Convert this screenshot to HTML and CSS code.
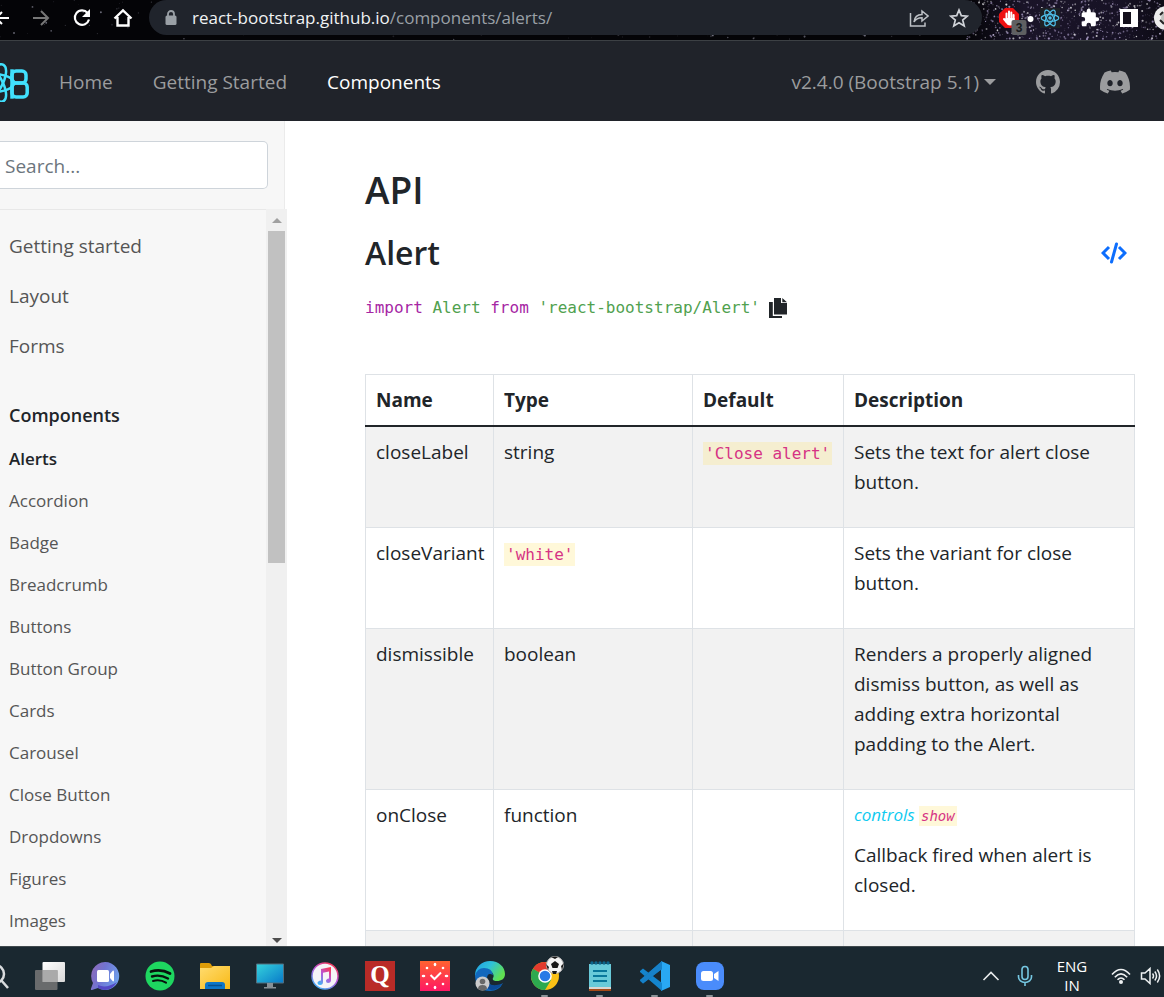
FILE: index.html
```html
<!DOCTYPE html>
<html lang="en">
<head>
<meta charset="utf-8">
<title>Alerts | React-Bootstrap</title>
<link rel="stylesheet" href="styles.css">
</head>
<body>
<header class="browser">
  <svg class="stars" id="stars" aria-hidden="true"></svg>
  <div class="browser-nav">
    <button class="icon-btn" aria-label="Back"><svg width="10" height="20" viewBox="10 0 10 20"><path d="M19 10H6M12 4l-6 6 6 6" fill="none" stroke="#fff" stroke-width="2"/></svg></button>
    <button class="icon-btn" aria-label="Forward"><svg width="20" height="20" viewBox="0 0 20 20"><path d="M2 10h14M10 3l7 7-7 7" fill="none" stroke="#777" stroke-width="2"/></svg></button>
    <button class="icon-btn" aria-label="Reload"><svg width="20" height="20" viewBox="0 0 20 20"><path d="M15.600 5A7.200 7.200 0 1 0 17 11.500" fill="none" stroke="#fff" stroke-width="2.200"/><path d="M18 1v8h-8z" fill="#fff"/></svg></button>
    <button class="icon-btn" aria-label="Home"><svg width="20" height="20" viewBox="0 0 20 20"><path d="M1.500 10.500L10 2.500l8.500 8M4.500 9v8.500h11V9" fill="none" stroke="#fff" stroke-width="2.400"/></svg></button>
  </div>
  <div class="address">
    <svg width="12" height="16" viewBox="0 0 12 16"><rect x="0.500" y="5.500" width="11" height="9.500" rx="1.500" fill="#9aa0a6"/><path d="M3 6V4a3 3 0 0 1 6 0v2" fill="none" stroke="#9aa0a6" stroke-width="1.800"/></svg>
    <span class="url">react-bootstrap.github.io<span class="url-path">/components/alerts/</span></span>
    <button class="icon-btn" aria-label="Share"><svg width="20" height="20" viewBox="0 0 20 20"><path d="M1.500 5v13H16v-3.500M5 14c.5-5 3-7.500 8-7.500V3l6 5-6 5V9.700c-4 0-6.300 1-8 4.300z" fill="none" stroke="#bdc1c6" stroke-width="1.500"/></svg></button>
    <button class="icon-btn" aria-label="Bookmark"><svg width="20" height="20" viewBox="0 0 20 20"><path d="M10 2l2.300 5.600 6 .5-4.600 3.900 1.500 5.900L10 14.700l-5.200 3.200L6.300 12 1.700 8.100l6-.5z" fill="none" stroke="#d0d3d8" stroke-width="1.700"/></svg></button>
  </div>
  <div class="extensions">
    <svg width="21" height="30" viewBox="0 -5 21 30"><path d="M6 0h8l6 6v8l-6 6H6l-6-6V6z" fill="#ed1111"/><g fill="none" stroke="#fff" stroke-width="2" stroke-linecap="round"><path d="M7.500 11V5.500M10 11V3.500M12.300 11V4.500M14.600 12V7M5 11l2.500 3"/></g><path d="M6.500 10h9.100v3q0 4.500-4.500 4.500-3 0-4.600-3.500z" fill="#fff"/><rect x="12.500" y="12" width="15" height="15" rx="2" fill="#5f6062"/><text x="20" y="24" font-size="12" text-anchor="middle" fill="#17191c" class="badge-text">3</text><circle cx="31.500" cy="11" r="3" fill="#fff"/></svg>
    <svg width="20" height="20" viewBox="0 0 20 20"><path d="M0 0h20v20H0z" fill="#1e2125"/><g fill="none" stroke="#4fbfe8" stroke-width="1.200"><ellipse cx="10" cy="10" rx="8.800" ry="3.400"/><ellipse cx="10" cy="10" rx="8.800" ry="3.400" transform="rotate(60 10 10)"/><ellipse cx="10" cy="10" rx="8.800" ry="3.400" transform="rotate(120 10 10)"/></g><circle cx="10" cy="10" r="1.800" fill="#4fbfe8"/></svg>
    <svg width="20" height="20" viewBox="0 0 24 24"><path d="M20.500 11H19V7a2 2 0 0 0-2-2h-4V3.500a2.500 2.500 0 0 0-5 0V5H4a2 2 0 0 0-2 2v3.800h1.500a2.700 2.700 0 0 1 0 5.400H2V20a2 2 0 0 0 2 2h3.800v-1.500a2.700 2.700 0 0 1 5.400 0V22H17a2 2 0 0 0 2-2v-4h1.500a2.500 2.500 0 0 0 0-5z" fill="#fff"/></svg>
    <svg width="20" height="20" viewBox="0 0 20 20"><path d="M0 1h18v18H0z" fill="#fff"/><path d="M3 4h8v12H3z" fill="#14101c"/></svg>
    <svg width="10" height="24" viewBox="0 0 10 24"><circle cx="12" cy="12" r="12" fill="#ececec"/><circle cx="14" cy="12" r="7" fill="#bfc0bd"/><path d="M6 9l3-3M6 14l4 4" stroke="#252525" stroke-width="2"/></svg>
  </div>
</header>

<nav class="navbar">
  <a class="brand" href="#home" aria-label="React Bootstrap"><svg width="30" height="40" viewBox="0 0 30 40"><g fill="none" stroke="#41e0fd"><g stroke-width="2.500"><ellipse cx="-7" cy="21" rx="21" ry="9"/><ellipse cx="-7" cy="21" rx="21" ry="9" transform="rotate(60 -7 21)"/><ellipse cx="-7" cy="21" rx="21" ry="9" transform="rotate(-60 -7 21)"/></g><rect x="12" y="9" width="14" height="12" rx="4" stroke-width="3.500"/><rect x="12" y="21" width="15.200" height="14" rx="4" stroke-width="3.500"/><path d="M12 7.300v29.400" stroke-width="3.500"/></g></svg></a>
  <a class="nav-link" href="#home">Home</a>
  <a class="nav-link" href="#start">Getting Started</a>
  <a class="nav-link current" href="#components">Components</a>
  <button class="version">v2.4.0 (Bootstrap 5.1)<span class="caret"></span></button>
  <a class="social" href="#github" aria-label="GitHub"><svg width="24" height="24" viewBox="0 0 16 16"><path fill="#9b9c9e" d="M8 0C3.580 0 0 3.580 0 8c0 3.540 2.290 6.530 5.470 7.590.4.070.55-.17.55-.38 0-.19-.01-.82-.01-1.490-2.010.37-2.530-.49-2.690-.94-.09-.23-.48-.94-.82-1.130-.28-.15-.68-.52-.01-.53.63-.01 1.080.58 1.230.82.72 1.210 1.870.87 2.330.66.070-.52.28-.87.51-1.070-1.780-.2-3.640-.89-3.640-3.950 0-.87.31-1.590.82-2.150-.08-.2-.36-1.020.08-2.120 0 0 .67-.21 2.200.82.64-.18 1.320-.27 2-.27s1.360.09 2 .27c1.530-1.040 2.200-.82 2.200-.82.44 1.100.16 1.920.08 2.120.51.56.82 1.270.82 2.150 0 3.070-1.870 3.750-3.650 3.950.29.25.54.73.54 1.480 0 1.070-.01 1.930-.01 2.200 0 .21.15.46.55.38A8.010 8.010 0 0 0 16 8c0-4.420-3.580-8-8-8z"/></svg></a>
  <a class="social" href="#discord" aria-label="Discord"><svg width="30" height="30" viewBox="0 0 16 16"><path fill="#9b9c9e" d="M13.545 2.907a13.227 13.227 0 0 0-3.257-1.011.05.05 0 0 0-.052.025c-.141.25-.297.577-.406.833a12.190 12.190 0 0 0-3.658 0 8.258 8.258 0 0 0-.412-.833.051.051 0 0 0-.052-.025c-1.125.194-2.220.534-3.257 1.011a.041.041 0 0 0-.021.018C.356 6.024-.213 9.047.066 12.032c.001.014.01.028.021.037a13.276 13.276 0 0 0 3.995 2.020.05.05 0 0 0 .056-.019c.308-.42.582-.863.818-1.329a.05.05 0 0 0-.028-.07 8.735 8.735 0 0 1-1.248-.595.05.05 0 0 1-.005-.085c.084-.063.168-.129.248-.195a.05.05 0 0 1 .051-.007c2.619 1.196 5.454 1.196 8.041 0a.052.052 0 0 1 .053.007c.08.066.164.132.248.195a.051.051 0 0 1-.004.085 8.254 8.254 0 0 1-1.249.594.05.05 0 0 0-.027.071c.24.465.515.909.817 1.329a.05.05 0 0 0 .056.019 13.235 13.235 0 0 0 4.001-2.020.049.049 0 0 0 .021-.037c.334-3.451-.559-6.449-2.366-9.106a.034.034 0 0 0-.020-.019zM5.347 10.214c-.789 0-1.438-.724-1.438-1.612s.637-1.613 1.438-1.613c.807 0 1.450.73 1.438 1.613 0 .888-.637 1.612-1.438 1.612zm5.316 0c-.788 0-1.438-.724-1.438-1.612s.637-1.613 1.438-1.613c.807 0 1.451.73 1.438 1.613 0 .888-.631 1.612-1.438 1.612z"/></svg></a>
</nav>

<div class="page">
  <aside class="sidebar">
    <form class="search"><input type="search" placeholder="Search..." aria-label="Search"></form>
    <div class="toc">
      <ul class="toc-list">
        <li class="section"><a href="#s1">Getting started</a></li>
        <li class="section"><a href="#s2">Layout</a></li>
        <li class="section"><a href="#s3">Forms</a></li>
        <li class="section open"><a href="#s4">Components</a></li>
        <li class="active"><a href="#alerts">Alerts</a></li>
        <li><a href="#accordion">Accordion</a></li>
        <li><a href="#badge">Badge</a></li>
        <li><a href="#breadcrumb">Breadcrumb</a></li>
        <li><a href="#buttons">Buttons</a></li>
        <li><a href="#button-group">Button Group</a></li>
        <li><a href="#cards">Cards</a></li>
        <li><a href="#carousel">Carousel</a></li>
        <li><a href="#close-button">Close Button</a></li>
        <li><a href="#dropdowns">Dropdowns</a></li>
        <li><a href="#figures">Figures</a></li>
        <li><a href="#images">Images</a></li>
      </ul>
      <div class="scrollbar">
        <span class="arrow up"></span><span class="thumb"></span><span class="arrow down"></span>
      </div>
    </div>
  </aside>
  <main class="content">
    <h2>API</h2>
    <div class="title-row">
      <h3>Alert</h3>
      <a href="#source" aria-label="View source"><svg width="26" height="22" viewBox="0 0 26 22"><path d="M8 5l-6 6 6 6M18 5l6 6-6 6" fill="none" stroke="#0d6efd" stroke-width="3"/><path d="M15.500 2l-5 18" stroke="#0d6efd" stroke-width="3" stroke-linecap="round"/></svg></a>
    </div>
    <div class="import-row">
      <code><span class="kw">import</span> Alert <span class="kw">from</span> 'react-bootstrap/Alert'</code>
      <button class="icon-btn" aria-label="Copy"><svg width="18" height="20" viewBox="0 0 18 20"><path d="M5 0h7v5h6v11.500H5zM13.300 0L18 4.200h-4.700zM0 4h3.800v14H13v2H0z" fill="#212529"/></svg></button>
    </div>
    <table>
      <colgroup><col class="c-name"><col class="c-type"><col class="c-default"><col></colgroup>
      <thead><tr><th>Name</th><th>Type</th><th>Default</th><th>Description</th></tr></thead>
      <tbody>
        <tr><td>closeLabel</td><td>string</td><td><code>'Close alert'</code></td><td><p>Sets the text for alert close button.</p></td></tr>
        <tr><td>closeVariant</td><td><code>'white'</code></td><td></td><td><p>Sets the variant for close button.</p></td></tr>
        <tr><td>dismissible</td><td>boolean</td><td></td><td><p>Renders a properly aligned dismiss button, as well as adding extra horizontal padding to the Alert.</p></td></tr>
        <tr><td>onClose</td><td>function</td><td></td><td><div class="controls">controls <code>show</code></div><p>Callback fired when alert is closed.</p></td></tr>
        <tr><td>&nbsp;</td><td></td><td></td><td></td></tr>
      </tbody>
    </table>
  </main>
</div>

<footer class="taskbar">
  <svg width="22" height="30" viewBox="0 0 22 30"><circle cx="-5" cy="13" r="9" fill="none" stroke="#d9dcde" stroke-width="2.500"/><path d="M1 19l7 8" stroke="#d9dcde" stroke-width="2.500"/></svg>
  <div class="apps">
    <span class="app"><svg viewBox="0 0 30 30"><defs><linearGradient id="tv" x1="0" y1="0" x2="1" y2="1"><stop stop-color="#fff"/><stop offset="1" stop-color="#d8d8d8"/></linearGradient></defs><rect x="7.500" y="1" width="22.500" height="20" rx="1" fill="url(#tv)"/><rect y="9" width="22.500" height="20" rx="1" fill="#747474" fill-opacity=".88"/><path d="M7.500 9h15v12h-15z" fill="#aaa"/></svg></span>
    <span class="app"><svg viewBox="0 0 30 30"><defs><linearGradient id="tm" x1="0" x2="1" y2=".4"><stop stop-color="#9469b5"/><stop offset=".5" stop-color="#7074d2"/><stop offset="1" stop-color="#6f9be8"/></linearGradient></defs><path d="M15 1a14 14 0 1 1-7 26l-6 2q-1.500 0-1-1.500L3 22A14 14 0 0 1 15 1z" fill="url(#tm)"/><path d="M8 24q8 4 19-3-5 8-12 8-4 0-7-2z" fill="#5449c5"/><rect x="7" y="9" width="12" height="12" rx="1.500" fill="#fff"/><path d="M20 13l3-3.500q1 0 1 1v9q0 1-1 1L20 17z" fill="#fff"/></svg></span>
    <span class="app"><svg viewBox="0 0 30 30"><circle cx="15" cy="15" r="14.500" fill="#1ed760"/><g fill="none" stroke="#08130d" stroke-linecap="round"><path d="M6 10.500q10-3 19 2" stroke-width="2.800"/><path d="M7 15.500q8-2.500 16 2" stroke-width="2.400"/><path d="M8 20q7-2 13 1.700" stroke-width="2"/></g></svg></span>
    <span class="app"><svg viewBox="0 0 30 30"><defs><linearGradient id="fd" x1="0" y1="0" x2="1" y2="1"><stop stop-color="#ffdc70"/><stop offset="1" stop-color="#f9b915"/></linearGradient></defs><path d="M0 3q0-1 1-1h8q2 0 3 3h17v10H0z" fill="#dd9c08"/><path d="M0 7h11l3-2h16v23H0z" fill="url(#fd)"/><path d="M5 28v-4q0-3 3-3h14q3 0 3 3v4z" fill="#0d76c9"/><path d="M8 24.500h14" stroke="#07508f" stroke-width="1.500"/></svg></span>
    <span class="app"><svg viewBox="0 0 30 30"><defs><linearGradient id="pc" x1="0" y1="0" x2="1" y2="1"><stop stop-color="#35d3dc"/><stop offset="1" stop-color="#0879c9"/></linearGradient></defs><path d="M1.500 3h27v19h-27z" fill="url(#pc)" stroke="#536e7d"/><path d="M12 22h6v4h3v1.500H9V26h3z" fill="#879096"/></svg></span>
    <span class="app"><svg viewBox="0 0 30 30"><defs><linearGradient id="it" x1=".8" y1="0" x2=".2" y2="1"><stop stop-color="#fb3950"/><stop offset=".45" stop-color="#b855d9"/><stop offset="1" stop-color="#3eb5f5"/></linearGradient></defs><circle cx="15" cy="15" r="13" fill="#f5f4f7" stroke="url(#it)" stroke-width="1.500"/><path d="M11 8l10-2v13q0 3-3 3-2 0-2-2t3-2.500V10.500l-6 1.200V21q0 3-3 3-2.500 0-2.500-2t3.500-2.500z" fill="url(#it)"/></svg></span>
    <span class="app"><svg viewBox="0 0 30 30"><path d="M0 0h30v30H0z" fill="#b92b27"/><text x="15" y="22" font-size="25" text-anchor="middle" fill="#fff" class="serif-mark">Q</text></svg></span>
    <span class="app"><svg viewBox="0 0 30 30"><defs><linearGradient id="ck" x1="0" y1="0" x2="0" y2="1"><stop stop-color="#ff6230"/><stop offset="1" stop-color="#ff1764"/></linearGradient></defs><path d="M0 0h30v30H0z" fill="url(#ck)"/><g fill="#fff"><ellipse cx="15" cy="3.500" rx="1.300" ry="1.800"/><ellipse cx="15" cy="26.500" rx="1.300" ry="1.800"/><ellipse cx="3.500" cy="15" rx="1.800" ry="1.300"/><ellipse cx="26.500" cy="15" rx="1.800" ry="1.300"/><circle cx="7" cy="7" r="1.300"/><circle cx="23" cy="7" r="1.300"/><circle cx="7" cy="23" r="1.300"/><circle cx="23" cy="23" r="1.300"/></g><path d="M10.500 14l4 4L21 11.500" fill="none" stroke="#fff" stroke-width="2"/></svg></span>
    <span class="app"><svg viewBox="0 0 30 30"><defs><linearGradient id="ed" x1="0" y1="0" x2="1" y2=".5"><stop stop-color="#1f9ce6"/><stop offset=".5" stop-color="#2fc2d8"/><stop offset="1" stop-color="#60df50"/></linearGradient></defs><path d="M0 14A15 14.500 0 0 1 15 0c9 0 15 6 15 13 0 5-4 7-8 7-3 0-5-1-4-3 2-3-1-7-5-7-5 0-9 4-9 9z" fill="url(#ed)"/><path d="M0 15Q2 7 9 7q8 0 9 7-6-3-6 4 1 7 8 7 4 0 8-3-4 8-13 8Q1 30 0 15z" fill="#1268bd"/><path d="M11 17q1 10 16 6-4 6-11 6-7-2-5-12z" fill="#0c4a96"/><circle cx="7.500" cy="22.500" r="7" fill="#cbcbcb"/><circle cx="7.500" cy="20.500" r="2.800" fill="#686868"/><path d="M3 28q0-4 4.500-4t4.500 4q-4 3-9 0z" fill="#686868"/></svg></span>
    <span class="app running"><svg viewBox="0 0 30 30"><circle cx="15" cy="15" r="14" fill="#fbc116"/><path d="M15 15L27 8A14 14 0 0 0 3 8z" fill="#e33b2e"/><path d="M15 15L3 7.800A14 14 0 0 0 15 29l6-10z" fill="#2da94f"/><path d="M3 8A14 14 0 0 1 15 1v8z" fill="#e33b2e"/><circle cx="15" cy="15" r="6.800" fill="#fff"/><circle cx="15" cy="15" r="5.300" fill="#287ae6"/></svg><svg class="ball" viewBox="0 0 18 18"><circle cx="9" cy="9" r="8.500" fill="#f4f4f4" stroke="#b5b5b5"/><path d="M9 5l4 3-1.500 4h-5L5 8zM5 1l4-.5L12 1 9 3zM0 8l3 3-1 3zM18 7l-3 3 1 4zM6 15h5l-1 3H7z" fill="#171717"/></svg></span>
    <span class="app running"><svg viewBox="0 0 30 30"><path d="M4 3h22v26H4z" fill="#68cad9"/><path d="M4 26h22v3H4z" fill="#d8d6d2"/><path d="M4 28h22v2H4z" fill="#a44a18"/><g stroke="#08779b" stroke-width="2"><path d="M8 10h14M8 15h14M8 20h14"/></g><g fill="#0c668c"><circle cx="7" cy="2" r="1.700"/><circle cx="11" cy="2" r="1.700"/><circle cx="15" cy="2" r="1.700"/><circle cx="19" cy="2" r="1.700"/><circle cx="23" cy="2" r="1.700"/></g></svg></span>
    <span class="app running"><svg viewBox="0 0 30 30"><path d="M21 0l9 4v22l-9 4V0z" fill="#29a8f3"/><path d="M0 10l3-2.500L22 22v8L0 11z" fill="#1485ce"/><path d="M0 20l3 2.500L22 8V0L0 19z" fill="#0871b8"/><path d="M3 22.500L22 8v-8L0 19z" fill="#1781c8"/></svg></span>
    <span class="app running"><svg viewBox="0 0 30 30"><rect x="1" y="1" width="28" height="28" rx="8" fill="#4a8cfb"/><rect x="6" y="10" width="12" height="10" rx="2.500" fill="#fff"/><path d="M19 13l4.500-3v10L19 17z" fill="#fff"/></svg></span>
  </div>
  <div class="tray">
    <svg width="18" height="20" viewBox="0 0 18 20"><path d="M1.500 14L9 6.500l7.500 7.500" fill="none" stroke="#e8ebec" stroke-width="1.600"/></svg>
    <svg width="16" height="22" viewBox="0 0 16 22"><g fill="none" stroke="#75c7e2" stroke-width="1.600"><rect x="5" y="1.500" width="6" height="13" rx="3"/><path d="M1.500 10v2a6.500 5.500 0 0 0 13 0v-2M8 17.500V21"/></g></svg>
    <div class="lang"><span>ENG</span><span>IN</span></div>
    <div class="status">
      <svg width="20" height="18" viewBox="0 0 20 18"><g fill="none" stroke="#eef1f2" stroke-width="1.600"><path d="M1 7.500q9-10 18 0M3.800 10.200q6.200-6.700 12.400 0M6.500 12.800q3.500-3.600 7 0"/></g><circle cx="10" cy="15" r="2" fill="#eef1f2"/></svg>
      <svg width="22" height="18" viewBox="0 0 22 18"><g fill="none" stroke="#eef1f2" stroke-width="1.500"><path d="M1.500 6v6H5l5 4.500v-15L5 6zM12.500 6.500q2 2.500 0 5M14.800 4.500q3.500 4.500 0 9M17.300 2.500q4.700 6.500 0 13"/></g></svg>
    </div>
  </div>
</footer>
<script src="stars.js"></script>
</body>
</html>
```

FILE: styles.css
```css
* { box-sizing: border-box; }
body {
  margin: 0;
  height: 100vh;
  overflow: hidden;
  display: flex;
  flex-direction: column;
  font-family: "Open Sans", "Noto Sans", sans-serif;
  font-size: 19px;
  line-height: 30px;
  color: #212529;
  background: #fff;
}
a { color: inherit; text-decoration: none; }
button { font: inherit; color: inherit; background: none; border: 0; padding: 0; }
svg { display: block; flex: none; }
.icon-btn { display: flex; }

.browser {
  position: relative;
  flex: none;
  display: flex;
  height: 41px;
  padding-bottom: 5px;
  background: #040407;
  border-bottom: 1px solid #3c4044;
}
.stars { position: absolute; inset: 0; width: 100%; height: 100%; background: linear-gradient(90deg, #040407 83%, #1a1428 88%, #171225 96%, #0d0b15); }
.browser-nav { position: relative; display: flex; align-items: center; gap: 21px; padding-right: 16px; }
.address {
  position: relative;
  flex: 1;
  display: flex;
  align-items: center;
  gap: 15px;
  padding: 0 13px 0 16px;
  background: #20242c;
  border-radius: 18px;
}
.address .icon-btn { margin-left: 5px; }
.url { flex: 1; color: #f1f3f4; font-size: 17px; }
.url-path { color: #9aa0a6; }
.extensions {
  position: relative;
  display: flex;
  align-items: center;
  gap: 20px;
  width: 182px;
  padding-left: 17px;
}
.extensions > :first-child { overflow: visible; }
.extensions > :last-child { margin-left: -6px; }
.badge-text { font-family: "Liberation Sans", sans-serif; font-weight: bold; }
.serif-mark { font-family: "Liberation Serif", serif; font-weight: bold; }

.navbar {
  flex: none;
  display: flex;
  align-items: center;
  height: 80px;
  padding: 2px 34px 0 0;
  background: #20232a;
  color: #9b9c9e;
}
.brand { margin-right: 9px; }
.nav-link { padding: 0 20px; }
.current { color: #fff; }
.version { display: flex; align-items: center; gap: 5px; margin-left: auto; }
.caret { border: 6px solid transparent; border-top-color: currentColor; border-bottom: 0; }
.social { margin-left: 40px; }

.page { flex: 1; min-height: 0; display: flex; }
.sidebar {
  flex: none;
  width: 285px;
  display: flex;
  flex-direction: column;
  background: #f7f7f7;
  border-right: 1px solid #ebebeb;
}
.search { padding: 20px 16px 20px 0; }
.search input {
  display: block;
  width: 100%;
  height: 48px;
  padding: 2px 5px 0;
  font: inherit;
  color: #212529;
  background: #fff;
  border: 1px solid #ced4da;
  border-left: 0;
  border-radius: 0 5px 5px 0;
}
.search input::placeholder { color: #6c757d; }
.toc { flex: 1; min-height: 0; display: flex; margin-right: -3px; }
.toc-list {
  flex: 1;
  margin: 0;
  padding: 11px 0 0 9px;
  list-style: none;
  overflow: hidden;
  border-top: 1px solid #e8e8e8;
  color: #555;
  line-height: 42px;
  font-size: 17px;
}
.toc-list .section { font-size: 19px; line-height: 50px; }
.toc-list .open { margin-top: 22px; line-height: 45px; color: #212529; font-weight: 600; font-size: 18px; }
.toc-list .active { color: #212529; font-weight: 600; }
.scrollbar { width: 21px; display: flex; flex-direction: column; align-items: center; background: #f0f0f0; }
.arrow { border: 5px solid transparent; }
.up { margin: 9px 0 8px; border-top: 0; border-bottom-color: #a0a0a0; }
.down { margin: auto 0 3px; border-bottom: 0; border-top-color: #4d4d4d; }
.thumb { width: 17px; height: 45%; background: #c1c1c1; }

.content { flex: 1; min-width: 0; padding: 46px 29px 0 80px; overflow: hidden; }
h2, h3 { margin: 0; font-weight: 600; }
h2 { font-size: 37px; line-height: 46px; }
h3 { font-size: 32px; line-height: 42px; }
.title-row { display: flex; align-items: center; justify-content: space-between; margin-top: 19px; padding-right: 8px; }
.import-row { display: flex; align-items: center; gap: 9px; min-height: 30px; margin: 19px 0 51px; color: #50a14f; }
.kw { color: #a626a4; }
code { font-family: "DejaVu Sans Mono", monospace; font-size: 16px; line-height: 20px; white-space: nowrap; }
table { width: 100%; table-layout: fixed; border-collapse: collapse; }
.c-name { width: 128px; }
.c-type { width: 199px; }
.c-default { width: 151px; }
th, td { padding: 10px; border: 1px solid #dee2e6; text-align: left; vertical-align: top; }
thead th { border-bottom: 2px solid #212529; font-weight: 700; }
tbody tr:nth-child(odd) { background: #f2f2f2; }
td p { margin: 0 0 20px; }
td code { padding: 2px; color: #d63384; background: #fff8d9; }
tr:nth-child(odd) code { background: #f5eed0; }
.controls { margin-bottom: 10px; font-size: 17px; font-style: italic; color: #0dcaf0; }
.controls code { font-size: 14px; }

.taskbar {
  flex: none;
  display: flex;
  align-items: center;
  height: 51px;
  padding-top: 7px;
  background: #1a2830;
  border-top: 1px solid #40494d;
}
.apps { display: flex; align-self: stretch; }
.app { position: relative; width: 55px; display: flex; justify-content: center; align-items: center; }
.app svg { width: 30px; height: 30px; }
.app .ball { position: absolute; width: 18px; height: 18px; right: 8px; top: 2px; }
.running::after { content: ""; position: absolute; bottom: 0; width: 7px; height: 2px; background: #8b9398; border-radius: 2px; }
.tray { margin-left: auto; display: flex; align-items: center; gap: 17px; padding-right: 2px; color: #fff; }
.lang { width: 44px; text-align: center; font-size: 15px; line-height: 19px; display: flex; flex-direction: column; }
.status { display: flex; gap: 9px; align-items: center; }
```

FILE: stars.js
```js
// Scatter a repeatable star field over the title bar, denser at the right.
const field = document.getElementById("stars");
let seed = 7;
const rand = () => (seed = (seed * 16807) % 2147483647) / 2147483647;
const star = (x, tint) => {
  const c = document.createElementNS("http://www.w3.org/2000/svg", "circle");
  c.setAttribute("cx", x + "%");
  c.setAttribute("cy", rand() * 40);
  c.setAttribute("r", 0.3 + rand() * 0.8);
  c.setAttribute("fill", tint);
  c.setAttribute("opacity", 0.2 + rand() * 0.6);
  field.appendChild(c);
};
for (let i = 0; i < 180; i++) star(rand() * 84, "#8c8c9c");
for (let i = 0; i < 600; i++) star(83 + rand() * 17, i % 3 ? "#b3a5d0" : "#ffffff");
```
